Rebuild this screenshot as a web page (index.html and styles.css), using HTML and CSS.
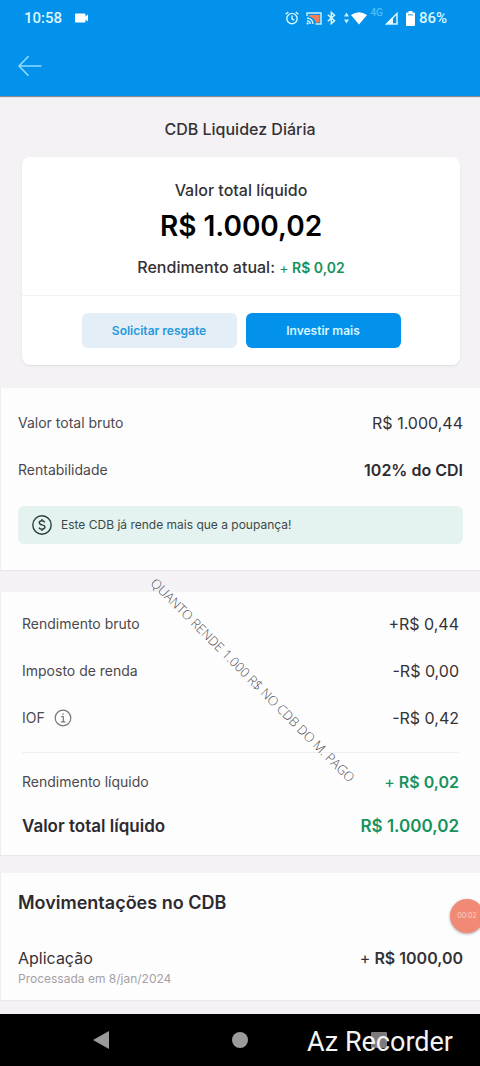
FILE: index.html
```html
<!DOCTYPE html>
<html lang="pt-BR">
<head>
<meta charset="utf-8">
<meta name="viewport" content="width=device-width, initial-scale=1">
<title>CDB Liquidez Diária</title>
<link rel="stylesheet" href="styles.css">
</head>
<body>
<div class="screen">
  <header class="top">
    <div class="status">
      <span class="status-left">
        <span>10:58</span>
        <svg width="14" height="10" viewBox="0 0 14 10" fill="#fff"><path d="M1 0.5h8.500q1 0 1 1v2L13 1.500v7L10.500 6.500v2q0 1-1 1H1q-1 0-1-1v-7q0-1 1-1z"/></svg>
      </span>
      <span class="status-right">
        <svg width="14" height="14" viewBox="0 0 14 14" fill="none" stroke="#d8f6ff" stroke-width="1.400"><circle cx="7" cy="7.600" r="5.200"/><path d="M7 4.500v3.300l2.200 1.400M0.700 3.300L3.300 1M13.300 3.300L10.700 1"/></svg>
        <svg class="cast" width="16" height="13" viewBox="0 0 16 13" fill="none"><path d="M3 3h10.500v7.500H10Q9 6 3 4.500z" fill="#f0805a"/><path d="M1 4V1h14v11H9.500M1 6q5.500 .5 6 6M1 8.700q3 .3 3.300 3.300" stroke="#c8f0ff" stroke-width="1.500"/><circle cx="1.500" cy="11.500" r="1" fill="#fff"/></svg>
        <svg class="bt" width="9" height="14" viewBox="0 0 9 14" fill="none" stroke="#d8f6ff" stroke-width="1.500"><path d="M0.800 3.800L7.500 9.800L4.300 12.600V1.400L7.500 4.200L0.800 10.200"/></svg>
        <svg width="23" height="14" viewBox="0 0 23 14" fill="#fff"><path d="M2.500 1.500L5 5.500H0zM2.500 12.500L0 8.500h5z" fill="#c8f0ff"/><path d="M7 4q8-5.500 16 0l-8 9.500z"/></svg>
        <span class="net">4G</span>
        <svg class="signal" width="13" height="13" viewBox="0 0 13 13"><path d="M12 1.500V12H1.500z" fill="none" stroke="#d8f6ff" stroke-width="1.500"/><path d="M8 5v7H1z" fill="#e8faff"/></svg>
        <svg class="battery" width="9" height="15" viewBox="0 0 9 15" fill="#fff"><path d="M2.500 0h4v1.500H8q1 0 1 1V14q0 1-1 1H1q-1 0-1-1V2.500q0-1 1-1h1.500z"/><path d="M2 3h5v1.500H2z" fill="#62bff2"/></svg>
        <span>86%</span>
      </span>
    </div>
    <button class="back" type="button" aria-label="Voltar">
      <svg width="24" height="22" viewBox="0 0 24 22" fill="none" stroke="#8fdcff" stroke-width="1.600"><path d="M23.500 11H1M10.500 1.200L1 11l9.500 9.800"/></svg>
    </button>
  </header>

  <main class="content">
    <h1 class="title">CDB Liquidez Diária</h1>

    <section class="card">
      <div class="balance">
        <h2 class="balance-label">Valor total líquido</h2>
        <p class="balance-value">R$ 1.000,02</p>
        <p class="yield">Rendimento atual: <span class="gain yield-value"><span class="plus">+</span> R$ 0,02</span></p>
      </div>
      <div class="actions">
        <button class="btn btn-soft" type="button">Solicitar resgate</button>
        <button class="btn btn-main" type="button">Investir mais</button>
      </div>
    </section>

    <section class="panel gross">
      <dl class="rows">
        <div class="row"><dt>Valor total bruto</dt><dd>R$ 1.000,44</dd></div>
        <div class="row"><dt>Rentabilidade</dt><dd class="strong">102% do CDI</dd></div>
      </dl>
      <p class="notice">
        <svg width="20" height="20" viewBox="0 0 20 20" fill="none" stroke="#27413e" stroke-width="1.400"><circle cx="10" cy="10" r="9.200"/><path d="M12.800 7.300q-.8-1.500-2.800-1.500-2.700 0-2.700 2 0 1.600 2.700 2.100 2.900.5 2.900 2.200 0 2.100-2.900 2.100-2.200 0-3-1.600M10 4v2M10 14v2"/></svg>
        <span>Este CDB já rende mais que a poupança!</span>
      </p>
    </section>

    <section class="panel net-panel">
      <dl class="rows details">
        <div class="row"><dt>Rendimento bruto</dt><dd>+R$ 0,44</dd></div>
        <div class="row"><dt>Imposto de renda</dt><dd>-R$ 0,00</dd></div>
        <div class="row"><dt class="with-icon">IOF
          <button class="info" type="button" aria-label="Sobre o IOF"><svg width="18" height="18" viewBox="0 0 18 18" fill="none" stroke="#77757b" stroke-width="1.200"><circle cx="9" cy="9" r="7.800"/><path d="M7.300 7.700H9.300V12.800M7 12.800h4.500M8.300 5.200h1.500"/></svg></button></dt><dd>-R$ 0,42</dd></div>
      </dl>
      <dl class="rows totals">
        <div class="row"><dt>Rendimento líquido</dt><dd class="gain"><span class="plus">+</span> R$ 0,02</dd></div>
        <div class="row total"><dt>Valor total líquido</dt><dd class="gain">R$ 1.000,02</dd></div>
      </dl>
      <p class="caption">QUANTO RENDE 1.000 R$ NO CDB DO M. PAGO</p>
    </section>

    <section class="panel moves">
      <h2 class="moves-title">Movimentações no CDB</h2>
      <div class="move">
        <div>
          <p class="move-name">Aplicação</p>
          <p class="move-date">Processada em 8/jan/2024</p>
        </div>
        <p class="move-value"><span class="plus">+</span> R$ 1000,00</p>
      </div>
      <span class="timer">00:02</span>
    </section>
  </main>

  <nav class="nav">
    <button type="button" aria-label="Voltar"><svg width="16" height="18" viewBox="0 0 16 18" fill="#9c9a9c"><path d="M16 0v18L0 9z"/></svg></button>
    <button type="button" aria-label="Início"><svg width="16" height="16" viewBox="0 0 16 16" fill="#9c9a9c"><circle cx="8" cy="8" r="8"/></svg></button>
    <button type="button" aria-label="Recentes"><svg width="16" height="16" viewBox="0 0 16 16" fill="#7c7a7c"><rect width="16" height="16" rx="1"/></svg></button>
    <span class="recorder">Az Recorder</span>
  </nav>
</div>
</body>
</html>
```
FILE: styles.css
```css
* { box-sizing: border-box; }
body, h1, h2, p, dl, dd { margin: 0; }
body {
  background: #f4f2f5;
  color: #343236;
  font-family: Inter, "Open Sans", sans-serif;
}
button { font: inherit; border: 0; padding: 0; background: none; cursor: pointer; }
svg { display: block; flex: none; }

.screen { min-height: 100vh; display: flex; flex-direction: column; overflow: hidden; }

/* Header */
.top { height: 96px; background: #0392eb; box-shadow: 0 1px 1px #8b8d96; }
.status {
  display: flex; justify-content: space-between; align-items: center;
  height: 36px; padding: 0 33px 0 24px;
  color: #dcf7ff;
  font: 500 15px/20px Roboto, sans-serif;
}
.status-left, .status-right { display: flex; align-items: center; }
.status-left { gap: 13px; }
.cast { margin-left: 7px; }
.bt { margin: 0 8px 0 5px; }
.net { align-self: flex-start; margin: 0 2px 0 3px; font-size: 10px; line-height: 10px; color: #50bdf7; }
.signal { margin-right: 8px; }
.battery { margin-right: 4px; }
.back { margin: 19px 0 0 18px; }

/* Balance card */
.content { flex: 1; }
.title { padding: 22px 0 17px; text-align: center; font-size: 16px; line-height: 22px; font-weight: 500; }
.card { margin: 0 20px 23px 22px; background: #fff; border-radius: 8px; box-shadow: 0 1px 2px #dddbe0; text-align: center; }
.balance { padding: 22px 16px 16px; border-bottom: 1px solid #f4f2f5; }
.balance-label { font-size: 16px; line-height: 22px; font-weight: 500; }
.balance-value { margin-top: 5px; color: #000; font-size: 28px; line-height: 40px; font-weight: 600; }
.yield { margin-top: 10px; font-size: 16px; line-height: 22px; font-weight: 500; }
.yield-value { font-size: 14px; }
.gain { color: #16935c; font-weight: 600; }
.plus { font-weight: 400; }
.actions { display: flex; justify-content: center; gap: 9px; padding: 17px 16px; }
.btn { width: 155px; height: 35px; border-radius: 6px; font-size: 12px; font-weight: 600; }
.btn-soft { background: #e3eef6; color: #2799dc; }
.btn-main { background: #0392eb; color: #d9f5ff; }

/* Panels */
.panel { position: relative; background: #fefdfe; border-left: 1px solid #efedf0; box-shadow: 0 1px 1px #eae8ec; }
.row { display: flex; justify-content: space-between; align-items: center; line-height: 24px; }
.row dt { font-size: 14px; color: #4b494d; }
.row dd { font-size: 16px; color: #343236; }
.row dd.gain { color: #16935c; font-weight: 600; }
.row dd.strong { font-weight: 600; color: #2d2b2f; }

.gross { padding: 23px 17px 26px; }
.gross .rows { display: grid; gap: 23px; }
.notice {
  display: flex; align-items: center; gap: 9px;
  margin-top: 24px; padding: 9px 14px;
  background: #e4f3f0; border-radius: 6px;
  color: #3b4a49; font-size: 12px; line-height: 20px;
}

.net-panel { margin-top: 22px; padding: 20px 21px 17px; }
.details { display: grid; gap: 23px; padding-bottom: 22px; border-bottom: 1px solid #f0eef1; }
.totals { display: grid; gap: 20px; padding-top: 17px; }
.with-icon { display: flex; align-items: center; gap: 9px; }
.row.total dt { font-size: 17px; font-weight: 600; color: #2d2b2f; }
.row.total dd { font-size: 17px; }
.caption {
  position: absolute; left: 102px; top: 78px; z-index: 1;
  width: 300px; text-align: center; white-space: nowrap;
  color: #4c4a4e;
  font: 300 13px/20px "Open Sans", sans-serif;
  transform: rotate(45deg);
}

.moves { margin-top: 18px; padding: 17px 17px 12px; }
.moves-title { font-size: 18px; line-height: 26px; font-weight: 600; color: #2d2b2f; }
.move { display: flex; justify-content: space-between; margin-top: 30px; }
.move-name { font-size: 16px; line-height: 24px; }
.move-date { font-size: 12px; line-height: 18px; color: #a3a1a5; }
.move-value { font-size: 16px; line-height: 24px; font-weight: 600; }
.timer {
  position: absolute; right: -4px; top: 26px;
  width: 34px; height: 34px; border-radius: 50%;
  background: #f08a75; box-shadow: 0 1px 3px #a9a3a3;
  color: #ffd0c2; font-size: 7px; line-height: 34px; text-align: center;
}

/* System navigation */
.nav {
  position: relative;
  display: grid; grid-template-columns: repeat(3, 1fr);
  height: 52px; padding: 0 31px; background: #000;
}
.nav button { display: grid; place-items: center; }
.recorder { position: absolute; right: 27px; top: 12px; color: #f4f4f4; font: 400 27px/32px Roboto, sans-serif; }
```
